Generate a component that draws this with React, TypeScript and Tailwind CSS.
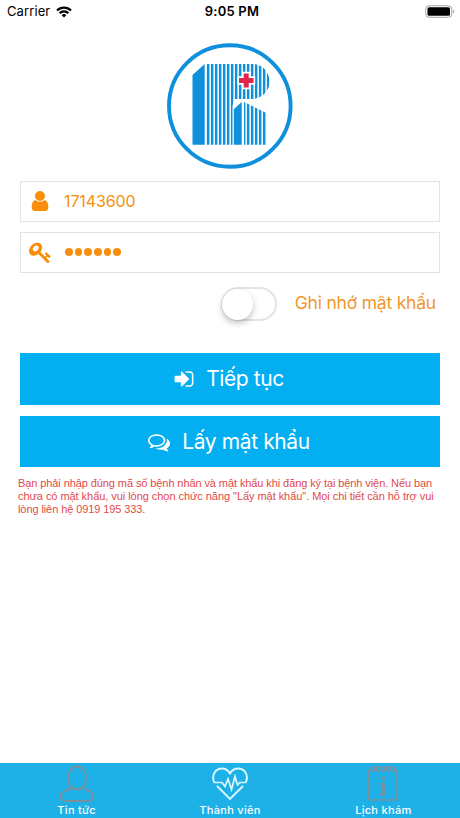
import React, { useState } from 'react';

const PATHS = {
  user: 'M1280 1399q0 109-62.5 187t-150.5 78h-854q-88 0-150.5-78t-62.5-187q0-85 8.5-160.5t31.5-152 58.5-131 94-89 134.5-34.5q131 128 313 128t313-128q76 0 134.5 34.5t94 89 58.5 131 31.5 152 8.5 160.5zm-256-887q0 159-112.5 271.5t-271.5 112.5-271.5-112.5-112.5-271.5 112.5-271.5 271.5-112.5 271.5 112.5 112.5 271.5z',
  key: 'M350 760A250 195 -45 0 0 704 406A250 195 -45 0 0 350 760ZM1683 1216q0 17-49 66t-66 49q-9 0-28.5-16t-36.5-33-38.5-40-24.5-26l-96 96 220 220q28 28 28 68 0 42-39 81t-81 39q-40 0-68-28l-671-671q-176 131-365 131-163 0-265.5-102.5t-102.5-265.5q0-160 95-313t248-248 313-95q163 0 265.5 102.5t102.5 265.5q0 189-131 365l355 355 96-96q-3-3-26-24.5t-40-38.5-33-36.5-16-28.5q0-17 49-66t66-49q13 0 23 10 6 6 46 44.5t82 79.5 86.5 86 73 78 28.5 41z',
  signIn: 'M1312 896q0 26-19 45l-544 544q-19 19-45 19t-45-19-19-45v-288h-448q-26 0-45-19t-19-45v-384q0-26 19-45t45-19h448v-288q0-26 19-45t45-19 45 19l544 544q19 19 19 45zm352-352v704q0 119-84.5 203.5t-203.5 84.5h-320q-13 0-22.5-9.5t-9.5-22.5q0-4-1-20t-.5-26.5 3-23.5 10-19.5 20.5-6.5h320q66 0 113-47t47-113v-704q0-66-47-113t-113-47h-312l-11.5-1-11.5-3-8-5.5-7-9-2-13.5q0-4-1-20t-.5-26.5 3-23.5 10-19.5 20.5-6.5h320q119 0 203.5 84.5t84.5 203.5z',
  comments: 'M704 384q-153 0-286 52t-211.5 141-78.5 191q0 82 53 158t149 132l97 56-35 84q34-20 62-39l44-31 53 10q78 14 153 14 153 0 286-52t211.5-141 78.5-191-78.5-191-211.5-141-286-52zm0-128q191 0 353.5 68.5t256.5 186.5 94 257-94 257-256.5 186.5-353.5 68.5q-86 0-176-16-124 88-278 128-36 9-86 16h-3q-11 0-20.5-8t-11.5-21q-1-3-1-6.5t.5-6.5 2-6l2.5-5 3.5-5.5 4-5 4.5-5 4-4.5q5-6 23-25t26-29.5 22.5-29 25-38.5 20.5-44q-124-72-195-177t-71-224q0-139 94-257t256.5-186.5 353.5-68.5zm822 1169q10 24 20.5 44t25 38.5 22.5 29 26 29.5 23 25q1 1 4 4.5t4.5 5 4 5 3.5 5.5l2.5 5 2 6 .5 6.5-1 6.5q-3 14-13 22t-22 7q-50-7-86-16-154-40-278-128-90 16-176 16-271 0-472-132 58 4 88 4 161 0 309-45t264-129q125-92 192-212t67-254q0-77-23-152 129 71 204 178t75 230q0 120-71 224.5t-195 176.5z',
};

const Icon = ({ name, viewBox = '0 0 1792 1792', className }: { name: keyof typeof PATHS; viewBox?: string; className?: string }) => (
  <svg viewBox={viewBox} className={className} fill="currentColor">
    <path d={PATHS[name]} fillRule="evenodd" />
  </svg>
);

const StatusBar = () => (
  <div className="flex h-6 items-center justify-between pl-[7px] pr-[5px] text-[13px] text-black">
    <div className="flex w-40 items-center gap-[6px]">
      <span className="tracking-[0.1px]">Carrier</span>
      <svg width="16" height="12" viewBox="0 0 16 12" fill="none" stroke="#000" strokeWidth="2.2">
        <path d="M1 4.5a10 10 0 0 1 14 0M3.6 7.3a6.2 6.2 0 0 1 8.8 0" />
        <path d="M8 11.5 5.7 9.2a3.2 3.2 0 0 1 4.6 0z" fill="#000" stroke="none" />
      </svg>
    </div>
    <span className="pl-[2px] font-semibold tracking-[0.2px]">9:05 PM</span>
    <div className="flex w-40 justify-end pb-[2px]">
      <svg width="30" height="13" viewBox="0 0 30 13">
        <rect x="0.75" y="0.75" width="26" height="11.5" rx="3.2" fill="none" stroke="#a3a3a3" />
        <rect x="2.5" y="2.3" width="22.5" height="8.4" rx="1.5" />
        <path d="M28.2 4.5c1.6.7 1.6 3.3 0 4z" fill="#a3a3a3" />
      </svg>
    </div>
  </div>
);

const STRIPES = Array.from({ length: 16 }, (_, i) => 46.9 + i * 4);

const Logo = () => (
  <svg width="140" height="140" viewBox="0 0 140 140">
    <defs>
      <clipPath id="letter">
        <path d="M46 28H92C103 28 109.5 37 109.5 45.5C109.5 55 102 63 91 63H73.5V66L72.5 70V108.7H46Z" />
        <path d="M84 66 106.5 77V108.7H84Z" />
      </clipPath>
    </defs>
    <circle cx="69.8" cy="70" r="60.8" fill="none" stroke="#0f90dc" strokeWidth="3.9" />
    <g fill="#0f90dc">
      <path d="M32.5 39 44.7 28V108.7H32.5ZM73.8 73.3 81.7 66V108.7H73.8Z" />
      <g clipPath="url(#letter)">
        {STRIPES.map(x => <rect key={x} x={x} y="27" width="2.5" height="82" />)}
      </g>
    </g>
    <path d="M83.700 37.500H88.700V42H93.500V47H88.700V51.500H83.700V47H79V42H83.700Z" fill="#e0264f" stroke="#fff" strokeWidth="3.4" paintOrder="stroke" />
  </svg>
);

const tabs = [
  {
    label: 'Tin tức',
    icon: (
      <svg width="38" height="38" viewBox="0 0 38 38" fill="none" stroke="#7b8f9b" strokeWidth="1.8">
        <ellipse cx="19" cy="14" rx="9.200" ry="11.500" />
        <path d="M13 25C8 25.500 2.500 28.500 2.500 32.500C2.500 35.500 5 37 9 37H29C33 37 35.500 35.500 35.500 32.500C35.500 28.500 30 25.500 25 25" />
      </svg>
    ),
  },
  {
    label: 'Thành viên',
    icon: (
      <svg width="38" height="38" viewBox="0 0 38 38" fill="none" stroke="#dff7ff" strokeWidth="1.9">
        <path d="M3 18C0 9 6 4.500 11 4.500C15 4.500 17.500 7 19 9.500C20.500 7 23 4.500 27 4.500C33 4.500 38 10 35 18M6 22 19 35 32 22" />
        <path d="M2.500 18.500H11L14 22.500 17 15 20.500 25.500 24 12.500 26.500 21 29 18.500H35.500" strokeWidth="1.7" />
      </svg>
    ),
  },
  {
    label: 'Lịch khám',
    icon: (
      <svg width="38" height="38" viewBox="0 0 38 38" fill="none" stroke="#7b8f9b" strokeWidth="1.6">
        <path d="M7 6H6Q4.500 6 4.500 7.500V34Q4.500 36 6.500 36H31Q33 36 33 34V7.500Q33 6 31.500 6H30.500" />
        <g strokeWidth="1.500">
          <circle cx="9" cy="5" r="1.900" />
          <circle cx="14" cy="5" r="1.900" />
          <circle cx="19" cy="5" r="1.900" />
          <circle cx="24" cy="5" r="1.900" />
          <circle cx="29" cy="5" r="1.900" />
        </g>
        <path d="M19 12.500V16M19 19V31" strokeWidth="3.600" />
        <path d="M16 19.800H19M16 30.500H22" strokeWidth="1.800" />
      </svg>
    ),
  },
];

export default function App() {
  const [remember, setRemember] = useState(false);
  const [code, setCode] = useState('17143600');
  const [password] = useState('123456');

  return (
    <div className="flex h-[818px] w-[460px] flex-col overflow-hidden bg-white font-['Inter',sans-serif]">
      <StatusBar />
      <div className="flex justify-center pt-3">
        <Logo />
      </div>

      <div className="mt-[5px] flex flex-col gap-2.5 px-5">
        <div className="flex h-[41px] items-center border border-[#e3e3e3] pb-[2px] text-[#f78f0c]">
          <div className="flex w-[38px] justify-center">
            <Icon name="user" viewBox="0 128 1280 1536" className="h-[20px] w-[18px]" />
          </div>
          <input
            value={code} onChange={(e) => setCode(e.target.value)}
            className="ml-[5px] w-80 text-base tracking-[-0.1px] outline-none"
          />
        </div>
        <div className="flex h-[41px] items-center border border-[#e3e3e3] pb-px text-[#f78f0c]">
          <div className="flex w-[38px] justify-center">
            <Icon name="key" className="h-[23px] w-[23px]" />
          </div>
          <div className="ml-[6px] flex gap-[2.200px]">
            {password.split('').map((_, i) => <span key={i} className="h-[7.500px] w-[7.500px] rounded-full bg-[#f78f0c]" />)}
          </div>
        </div>
      </div>

      <div className="mt-[13px] flex h-9 items-center justify-end pr-6">
        <button
          onClick={() => setRemember(!remember)}
          className="flex h-[34px] w-[56px] items-center rounded-full border-2 border-[#e4e4e4]"
        >
          <span className={`-ml-px h-[31px] w-[31px] shrink-0 rounded-full bg-white shadow-[0_3px_6px_rgba(0,0,0,0.25)] ${remember ? 'translate-x-[22px]' : ''}`} />
        </button>
        <span className="ml-[18px] pb-px text-[17.500px] tracking-[-0.2px] text-[#f0982d]">Ghi nhớ mật khẩu</span>
      </div>

      <div className="mt-[31px] flex flex-col gap-[11px] px-5 text-[21px] tracking-[-0.4px] text-white">
        <button className="flex h-[52px] items-center justify-center bg-[#03aff0] pr-[3px]">
          <Icon name="signIn" className="mr-[11px] h-[22px] w-[22px]" />
          Tiếp tục
        </button>
        <button className="flex h-[51px] items-center justify-center bg-[#03aff0] pr-[2px]">
          <Icon name="comments" className="mr-[12px] h-[22px] w-[22px]" />
          Lấy mật khẩu
        </button>
      </div>

      <p className="mt-[10px] pl-[18px] font-['Liberation_Sans',sans-serif] text-[11px] leading-[13px] tracking-[-0.09px] whitespace-nowrap text-[#e14a4a]">
        Bạn phải nhập đúng mã số bệnh nhân và mật khẩu khi đăng ký tại bệnh viện. Nếu bạn<br />
        <span className="tracking-[-0.05px]">chưa có mật khẩu, vui lòng chọn chức năng "Lấy mật khẩu". Mọi chi tiết cần hỗ trợ vui</span><br />
        lòng liên hệ 0919 195 333.
      </p>

      <div className="mt-auto grid h-[55px] grid-cols-3 bg-[#1eb1e8] text-white">
        {tabs.map(t => (
          <div key={t.label} className="flex flex-col items-center pt-px">
            {t.icon}
            <span className="mt-px text-[11px] leading-[14px] font-medium tracking-[0.3px]">{t.label}</span>
          </div>
        ))}
      </div>
    </div>
  );
}
